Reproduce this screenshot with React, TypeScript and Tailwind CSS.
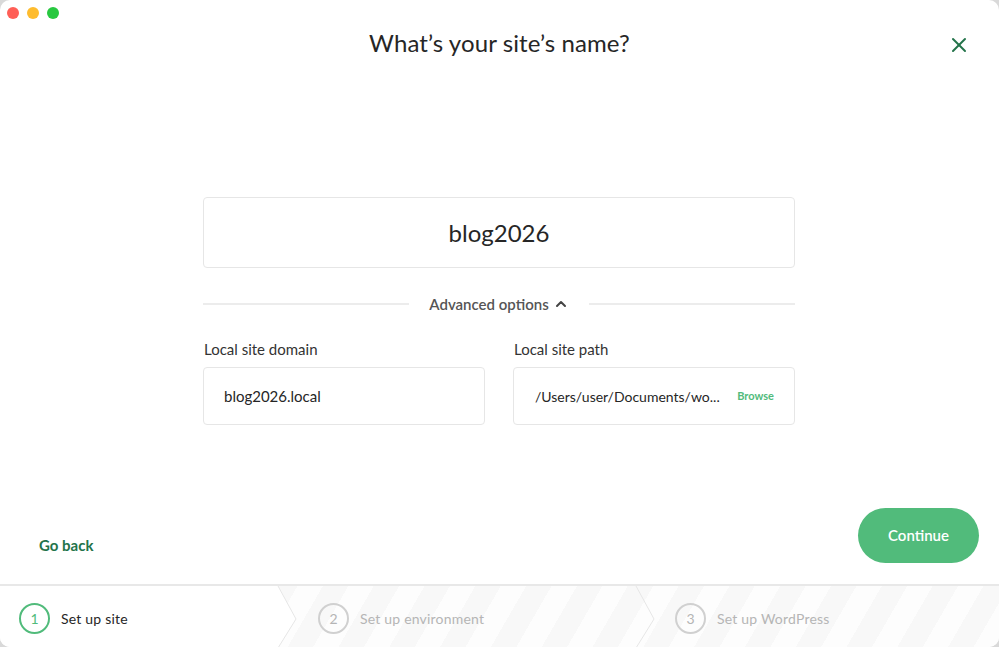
import { X, ChevronUp } from 'lucide-react';

const steps = [
  { n: 1, label: 'Set up site', active: true },
  { n: 2, label: 'Set up environment', active: false },
  { n: 3, label: 'Set up WordPress', active: false },
];

const Chevron = ({ x }: { x: number }) => (
  <svg className="absolute top-0 h-[62px] w-[24px] pointer-events-none" style={{ left: x }} viewBox="0 0 24 62">
    <polyline points="2,0 20,33 2,62" fill="none" stroke="#e6e6e6" strokeWidth="1" />
  </svg>
);

export default function App() {
  return (
    <div className="w-[999px] h-[647px] bg-[#d9d9d9] font-['Lato','Noto_Sans',sans-serif]">
      <div className="relative w-full h-full bg-white rounded-[10px] overflow-hidden flex flex-col">
        {/* title bar */}
        <div className="flex gap-[8px] pl-[7px] pt-[7px]">
          <span className="w-[12px] h-[12px] rounded-full bg-[#ff5f57]" />
          <span className="w-[12px] h-[12px] rounded-full bg-[#febc2e]" />
          <span className="w-[12px] h-[12px] rounded-full bg-[#28c840]" />
        </div>

        <div className="relative flex justify-center mt-[8px]">
          <h1 className="text-[24px] leading-[32px] text-[#262626] tracking-[0.1px]">What’s your site’s name?</h1>
          <button className="absolute right-[28px] top-[6px] text-[#23734a]">
            <X size={24} strokeWidth={2} />
          </button>
        </div>

        <div className="flex-1 flex flex-col">
          <div className="w-[592px] ml-[203px] mt-[138px]">
            <div className="h-[71px] border border-[#e6e6e6] rounded-[4px] flex items-center justify-center text-[24px] text-[#262626]">
              blog2026
            </div>

            <div className="flex items-center mt-[24px] h-[24px]">
              <div className="flex-1 h-[2px] bg-[#ececec]" />
              <div className="flex items-center gap-[4px] px-[20px] text-[15px] font-semibold text-[#555]">
                Advanced options
                <ChevronUp size={16} strokeWidth={3} className="text-[#444]" />
              </div>
              <div className="flex-1 h-[2px] bg-[#ececec]" />
            </div>

            <div className="grid grid-cols-2 gap-[28px] mt-[24px]">
              <div>
                <div className="text-[15px] text-[#333] pl-[1px] leading-[18px]">Local site domain</div>
                <div className="mt-[9px] h-[58px] border border-[#e6e6e6] rounded-[4px] flex items-center px-[20px] text-[15px] text-[#262626]">
                  blog2026.local
                </div>
              </div>
              <div>
                <div className="text-[15px] text-[#333] pl-[1px] leading-[18px]">Local site path</div>
                <div className="mt-[9px] h-[58px] border border-[#e6e6e6] rounded-[4px] flex items-center justify-between pl-[21px] pr-[20px] text-[14px] text-[#262626]">
                  <span className="whitespace-nowrap">/Users/user/Documents/wo...</span>
                  <span className="text-[11px] font-bold text-[#51bb7b]">Browse</span>
                </div>
              </div>
            </div>
          </div>
        </div>

        <div className="flex items-center justify-between pl-[39px] pr-[20px] pb-[21px]">
          <button className="text-[15px] font-bold text-[#23734a] mt-[20px]">Go back</button>
          <button className="w-[121px] h-[55px] rounded-full bg-[#51bb7b] text-white text-[15px] font-semibold">Continue</button>
        </div>

        {/* steps footer */}
        <div className="relative h-[63px] border-t-[2px] border-[#e8e8e8] flex bg-[repeating-linear-gradient(-60deg,#fdfdfd_0px,#fdfdfd_22px,#f8f8f8_22px,#f8f8f8_44px)]">
          <div className="absolute left-0 top-0 h-full w-[297px] bg-white [clip-path:polygon(0_0,278px_0,296px_53%,278px_100%,0_100%)]" />
          <Chevron x={276} />
          <Chevron x={634} />
          {steps.map((s, i) => (
            <div
              key={s.n}
              className={
                'relative flex items-center gap-[11px] pt-[3px] ' +
                (i === 0 ? 'w-[318px] pl-[19px]' : i === 1 ? 'w-[357px] pl-[0px]' : 'flex-1')
              }
            >
              <span
                className={
                  'w-[31px] h-[31px] rounded-full border-[2px] flex items-center justify-center text-[14px] ' +
                  (s.active ? 'border-[#51bb7b] text-[#51bb7b]' : 'border-[#d0d0d0] text-[#b5b5b5]')
                }
              >
                {s.n}
              </span>
              <span className={'text-[14px] tracking-[0.2px] ' + (s.active ? 'text-[#262626]' : 'text-[#b5b5b5]')}>{s.label}</span>
            </div>
          ))}
        </div>
      </div>
    </div>
  );
}
